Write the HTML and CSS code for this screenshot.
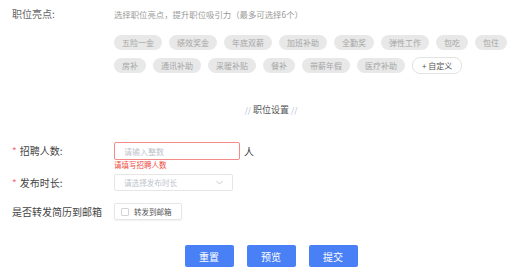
FILE: index.html
```html
<!DOCTYPE html>
<html lang="zh-CN">
<head>
  <meta charset="UTF-8" />
  <meta name="viewport" content="width=device-width, initial-scale=1" />
  <title>职位设置</title>
  <link rel="stylesheet" href="styles.css">
</head>
<body>
  <main class="form">
    <div class="row row-top">
      <div class="label">职位亮点:</div>
      <div class="field">
        <p class="hint">选择职位亮点，提升职位吸引力（最多可选择6个）</p>
        <div class="tags">
          <span class="tag">五险一金</span>
          <span class="tag">绩效奖金</span>
          <span class="tag">年底双薪</span>
          <span class="tag">加班补助</span>
          <span class="tag">全勤奖</span>
          <span class="tag">弹性工作</span>
          <span class="tag">包吃</span>
          <span class="tag">包住</span>
          <span class="tag">房补</span>
          <span class="tag">通讯补助</span>
          <span class="tag">采暖补贴</span>
          <span class="tag">餐补</span>
          <span class="tag">带薪年假</span>
          <span class="tag">医疗补助</span>
          <span class="tag tag-add">+ 自定义</span>
        </div>
      </div>
    </div>

    <div class="section-title"><span class="slash">//</span> 职位设置 <span class="slash">//</span></div>

    <div class="row row-count">
      <label class="label required" for="count">招聘人数:</label>
      <input class="input input-error" id="count" type="text" placeholder="请输入整数" />
      <span class="unit">人</span>
    </div>
    <div class="error">请填写招聘人数</div>

    <div class="row row-duration">
      <div class="label required">发布时长:</div>
      <div class="select">
        <span class="select-text">请选择发布时长</span>
        <svg class="chevron" width="7" height="5" viewBox="0 0 7 5"><polyline points="0.5,1 3.5,4 6.5,1" fill="none" stroke="#c0c4cc" stroke-width="0.9"/></svg>
      </div>
    </div>

    <div class="row row-mail">
      <div class="label">是否转发简历到邮箱</div>
      <label class="check">
        <span class="check-box"></span>
        <span class="check-text">转发到邮箱</span>
      </label>
    </div>

    <div class="actions">
      <button class="btn">重置</button>
      <button class="btn">预览</button>
      <button class="btn">提交</button>
    </div>
  </main>
</body>
</html>
```

FILE: styles.css
```css
body {
  margin: 0;
  background: #fff;
  font-family: "Noto Sans CJK SC", "Noto Sans", sans-serif;
  color: #333;
}

.form {
  padding: 6px 8px 0 12px;
}

.row {
  display: flex;
  align-items: center;
}

.row-top {
  align-items: flex-start;
}

.label {
  width: 102px;
  flex-shrink: 0;
  font-size: 10px;
  line-height: 16px;
  color: #444;
}

.row-top .label {
  color: #666;
}

.required::before {
  content: "*";
  color: #f56c6c;
  margin-right: 3px;
}

.hint {
  margin: 0;
  font-size: 8.4px;
  line-height: 16px;
  color: #999;
}

.tags {
  display: flex;
  flex-wrap: wrap;
  align-items: center;
  gap: 7px;
  margin-top: 13px;
}

.tag {
  height: 15px;
  line-height: 15px;
  padding: 0 8px;
  border-radius: 8px;
  background: #e8e8e8;
  color: #a6a6a6;
  font-size: 8px;
}

.tag-add {
  box-sizing: border-box;
  height: 17px;
  line-height: 15px;
  padding: 0 9px;
  background: #fff;
  border: 1px solid #e2e2e2;
  color: #555;
}

.section-title {
  margin-top: 29px;
  padding-left: 22px;
  text-align: center;
  font-size: 9px;
  line-height: 14px;
  color: #555;
}

.slash {
  color: #a9b6d6;
  font-size: 8px;
}

.row-count {
  margin-top: 25px;
}

.input {
  box-sizing: border-box;
  width: 126px;
  height: 18px;
  padding: 0 9px;
  border: 1px solid #ddd;
  border-radius: 2px;
  font-family: inherit;
  font-size: 8px;
  outline: none;
}

.input::placeholder {
  color: #c0c4cc;
}

.input-error {
  border-color: #f48a8a;
}

.unit {
  margin-left: 4px;
  font-size: 10px;
  color: #333;
}

.error {
  margin-left: 102px;
  font-size: 7.5px;
  line-height: 9px;
  color: #f0463c;
}

.row-duration {
  margin-top: 5px;
}

.select {
  box-sizing: border-box;
  width: 119px;
  height: 17px;
  padding: 0 9px 0 9px;
  border: 1px solid #e6e6e6;
  border-radius: 2px;
  display: flex;
  align-items: center;
  justify-content: space-between;
}

.select-text {
  font-size: 7.6px;
  color: #c0c4cc;
}

.row-mail {
  margin-top: 12px;
}

.check {
  box-sizing: border-box;
  width: 68px;
  height: 17px;
  padding: 0 6px;
  border: 1px solid #e6e6e6;
  border-radius: 2px;
  box-shadow: 0 1px 2px rgba(0, 0, 0, 0.06);
  display: flex;
  align-items: center;
  gap: 5px;
}

.check-box {
  box-sizing: border-box;
  width: 8px;
  height: 8px;
  border: 1px solid #d4d4d4;
  border-radius: 1px;
}

.check-text {
  font-size: 7.5px;
  color: #555;
}

.actions {
  margin-top: 25px;
  padding-left: 22px;
  display: flex;
  justify-content: center;
  gap: 13px;
}

.btn {
  width: 49px;
  height: 22px;
  padding: 0;
  border: none;
  border-radius: 2px;
  background: #4a80f5;
  color: #fff;
  font-family: inherit;
  font-size: 10px;
  cursor: pointer;
}
```
